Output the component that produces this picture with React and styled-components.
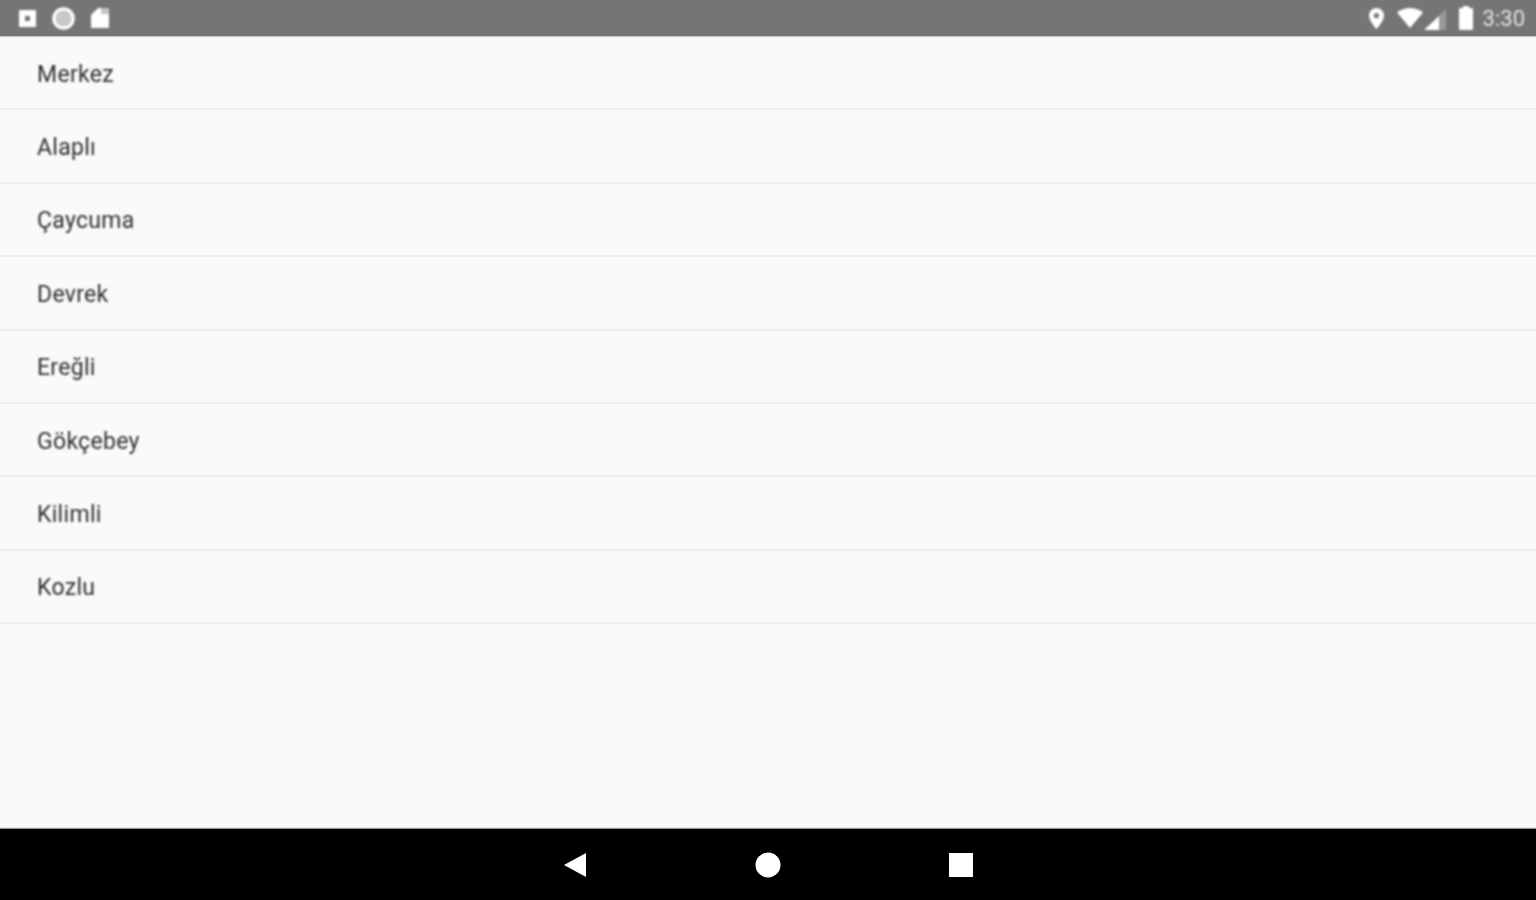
import React from 'react';
import styled, { createGlobalStyle } from 'styled-components';

const GlobalStyle = createGlobalStyle`
  html, body {
    margin: 0;
    padding: 0;
    height: 100%;
    overflow: hidden;
  }
`;

const Screen = styled.div`
  width: 1536px;
  height: 900px;
  display: flex;
  flex-direction: column;
  background: #fafafa;
  font-family: Roboto, "Liberation Sans", sans-serif;
`;

const StatusBar = styled.header`
  height: 36px;
  flex: none;
  background: #757575;
  box-shadow: 0 1px 1px rgba(117, 117, 117, 0.4);
  display: flex;
  justify-content: space-between;
  align-items: center;
  padding: 0 11px 0 18px;
`;

const IconGroup = styled.div`
  display: flex;
  align-items: center;
  gap: ${(p) => p.$gap}px;
  filter: blur(1px);
`;

const Clock = styled.span`
  font-size: 22px;
  color: #e4e4e4;
  margin-left: 9px;
`;

const List = styled.ul`
  flex: 1;
  list-style: none;
  margin: 0;
  padding: 1px 0 0;
`;

const Row = styled.li`
  height: 73.4px;
  box-sizing: border-box;
  display: flex;
  align-items: center;
  padding: 3px 0 0 37px;
  border-bottom: 2px solid #efefef;
  font-size: 23px;
  letter-spacing: 0.3px;
  color: #2e2e2e;
`;

const Label = styled.span`
  filter: blur(0.9px);
`;

const NavBar = styled.nav`
  height: 71px;
  flex: none;
  background: #000;
  box-shadow: 0 -1px 1px rgba(0, 0, 0, 0.4);
  display: flex;
  justify-content: center;
  align-items: center;
  gap: 168px;
`;

const NavIcon = styled.svg`
  filter: blur(0.6px);
`;

const places = ['Merkez', 'Alaplı', 'Çaycuma', 'Devrek', 'Ereğli', 'Gökçebey', 'Kilimli', 'Kozlu'];

function App() {
  return (
    <Screen>
      <GlobalStyle />
      <StatusBar>
        <IconGroup $gap={14}>
          <svg width="19" height="19" viewBox="0 0 19 19">
            <path fill="#fff" fillRule="evenodd" d="M2 1h15a1 1 0 0 1 1 1v15a1 1 0 0 1-1 1H2a1 1 0 0 1-1-1V2a1 1 0 0 1 1-1zM7 7v5h5V7z" />
          </svg>
          <svg width="25" height="25" viewBox="0 0 25 25">
            <circle cx="12.5" cy="12.5" r="9.5" fill="none" stroke="#fff" strokeWidth="3.6" />
            <circle cx="12.5" cy="12.5" r="7.8" fill="#c9c9c9" />
          </svg>
          <svg width="20" height="22" viewBox="0 0 20 22">
            <path fill="#fff" d="M8 1h10a1 1 0 0 1 1 1v18a1 1 0 0 1-1 1H2a1 1 0 0 1-1-1V8z" />
            <path fill="#c4c4c4" d="M11 1h7a1 1 0 0 1 1 1v5h-8z" />
          </svg>
        </IconGroup>
        <IconGroup $gap={0}>
          <svg width="17" height="23" viewBox="0 0 17 23" style={{ marginRight: 12 }}>
            <path fill="#fff" fillRule="evenodd" d="M8.5 1A7.5 7.5 0 0 0 1 8.5C1 14 8.5 22 8.5 22S16 14 16 8.5A7.5 7.5 0 0 0 8.5 1zm0 5a2.6 2.6 0 1 1 0 5.2 2.6 2.6 0 0 1 0-5.2z" />
          </svg>
          <svg width="26" height="20" viewBox="0 0 26 20">
            <path fill="#fff" d="M13 20 0 4.5C3.5 1.7 8 0 13 0s9.5 1.7 13 4.5z" />
          </svg>
          <svg width="24" height="23" viewBox="0 0 24 23" style={{ marginRight: 11, marginTop: 3 }}>
            <path fill="#fff" d="M1 22 16 8v14z" />
            <path fill="#9a9a9a" d="M16 8l7-7v21h-7z" />
          </svg>
          <svg width="16" height="26" viewBox="0 0 16 26">
            <path fill="#fff" d="M5 1h6v2h3a1 1 0 0 1 1 1v20a1 1 0 0 1-1 1H2a1 1 0 0 1-1-1V4a1 1 0 0 1 1-1h3z" />
          </svg>
          <Clock>3:30</Clock>
        </IconGroup>
      </StatusBar>
      <List>
        {places.map((place) => (
          <Row key={place}>
            <Label>{place}</Label>
          </Row>
        ))}
      </List>
      <NavBar>
        <NavIcon width="24" height="26" viewBox="0 0 24 26">
          <path fill="#fff" d="M23 1v24L1 13z" />
        </NavIcon>
        <NavIcon width="26" height="26" viewBox="0 0 26 26">
          <circle cx="13" cy="13" r="12.5" fill="#fff" />
        </NavIcon>
        <NavIcon width="24" height="24" viewBox="0 0 24 24">
          <rect width="24" height="24" fill="#fff" />
        </NavIcon>
      </NavBar>
    </Screen>
  );
}

export default App;
